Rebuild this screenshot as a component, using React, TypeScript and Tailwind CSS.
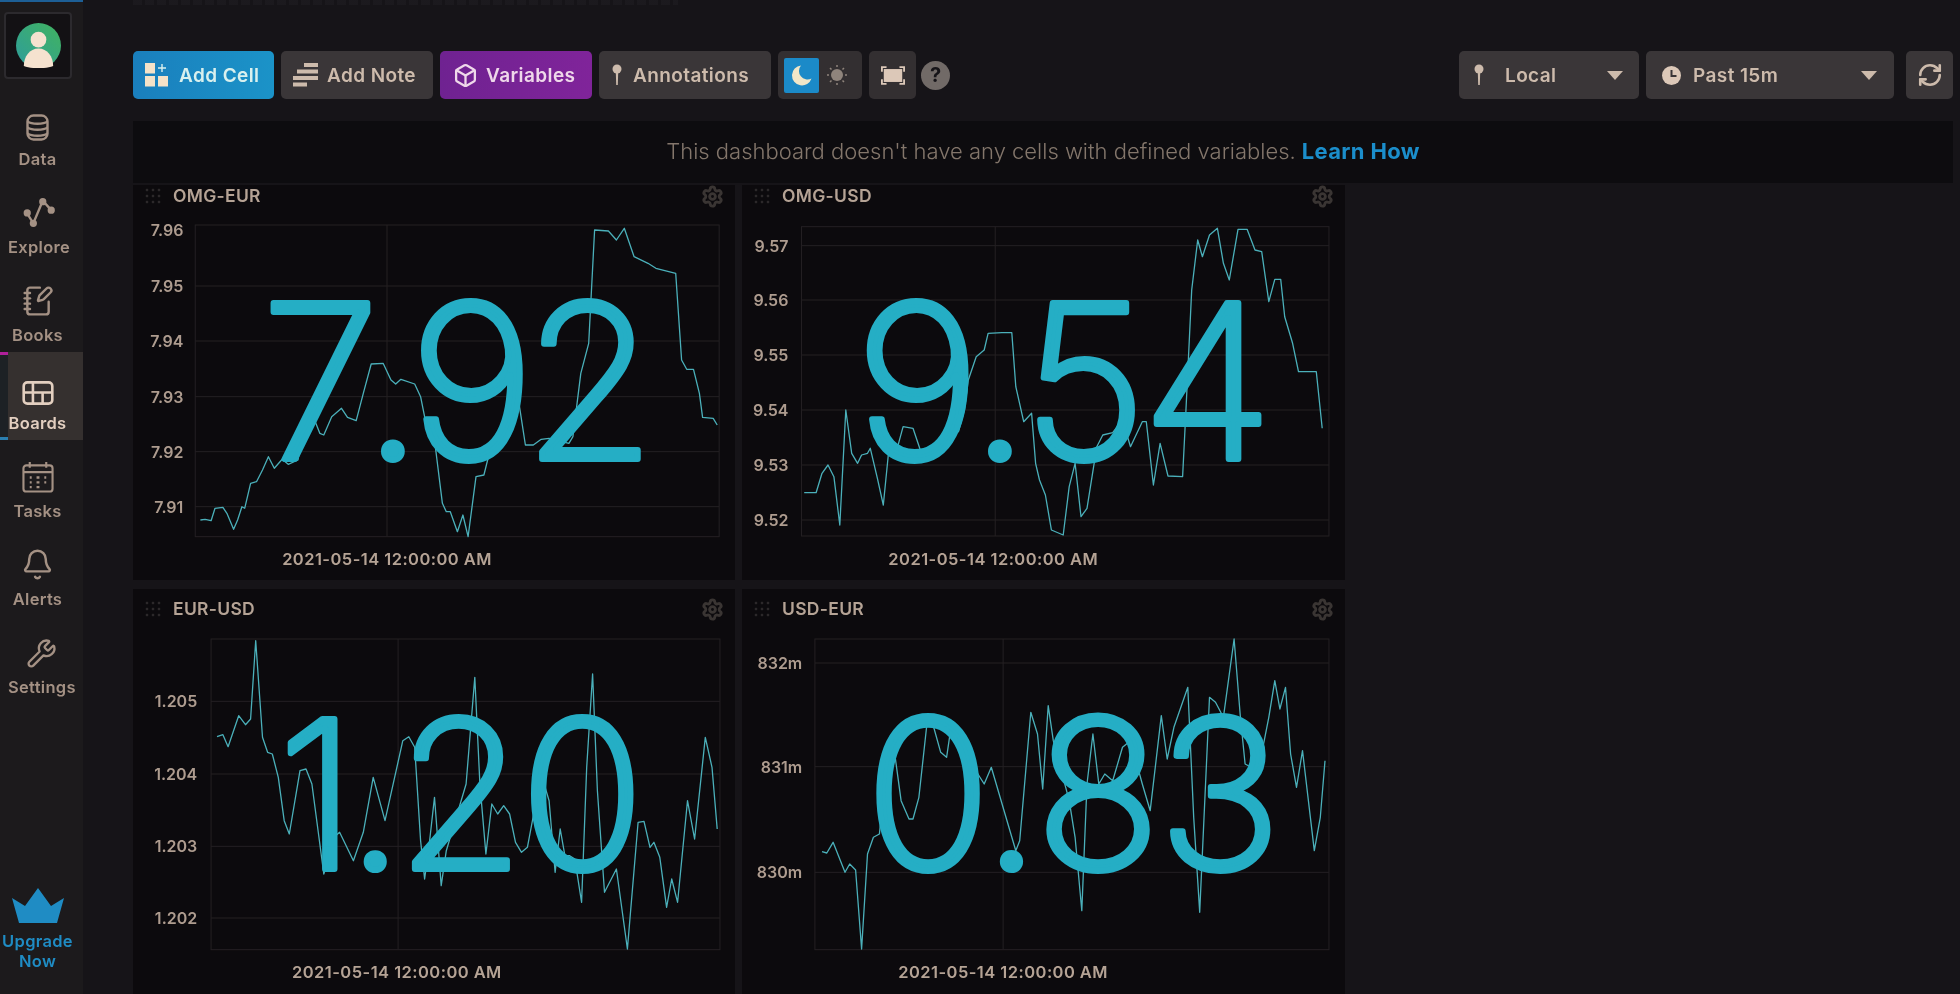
import React from "react";
import { NotebookPen, Bell, Wrench, Box, Settings as Gear, RefreshCw } from "lucide-react";

const SX = 1568 / 620;
const SY = 3;
const pts = (a: number[]) => {
  const o: string[] = [];
  for (let i = 0; i < a.length; i += 2) o.push(`${(a[i] / SX).toFixed(1)},${(a[i + 1] / SY).toFixed(1)}`);
  return o.join(" ");
};

type Cell = {
  title: string; value: string; box: number[]; h: number[]; v: number; labels: [string, number][]; labelRight: number; xc: number; xy: number; line: number[];
  head: string; num: [number, number, number, number];
};

const cells: Cell[] = [
  {
    title: "OMG-EUR", value: "7.92", box: [165, 135, 1490, 1070], h: [318, 483, 650, 815, 980], v: 650,
    labels: [["7.96", 150], ["7.95", 318], ["7.94", 483], ["7.93", 650], ["7.92", 815], ["7.91", 980]], labelRight: 135, xc: 650, xy: 1138,
    head: "h-[22px]", num: [320, 274, 214, -0.05],
    line: [178,1020,190,1018,205,1022,215,985,235,982,245,1000,262,1048,272,1020,283,980,290,985,305,910,320,905,335,870,350,830,365,865,385,838,400,853,425,840,440,735,460,700,480,760,490,765,510,710,535,685,550,712,572,722,590,640,610,552,640,550,660,600,672,612,685,598,720,612,735,650,750,740,770,780,790,970,800,995,810,995,828,1055,842,1005,855,1070,875,890,895,885,915,790,945,730,965,670,985,680,1000,795,1020,795,1040,778,1060,775,1110,790,1120,770,1140,580,1160,490,1175,150,1210,153,1230,180,1250,145,1275,230,1310,250,1330,265,1380,280,1395,540,1408,568,1425,568,1440,640,1448,712,1475,715,1485,735],
  },
  {
    title: "OMG-USD", value: "9.54", box: [158, 140, 1492, 1068], h: [197, 360, 525, 690, 855, 1020], v: 648,
    labels: [["9.57", 197], ["9.56", 360], ["9.55", 525], ["9.54", 690], ["9.53", 855], ["9.52", 1020]], labelRight: 125, xc: 643, xy: 1138,
    head: "h-[22px]", num: [320, 274, 214, -0.02],
    line: [165,938,195,938,210,880,225,855,240,890,255,1035,270,690,285,820,300,850,310,825,325,820,332,805,350,895,365,975,380,795,400,805,415,740,440,745,460,815,480,815,500,795,520,765,555,755,570,690,580,600,600,530,620,510,630,460,665,458,690,458,700,620,720,725,740,700,750,850,760,900,775,945,790,1050,820,1065,835,920,850,850,865,1010,880,985,905,800,920,765,945,758,970,720,990,800,1020,725,1030,725,1048,915,1065,790,1085,888,1122,890,1130,700,1145,330,1160,180,1172,230,1190,165,1210,145,1225,250,1240,300,1262,148,1285,148,1305,210,1322,215,1340,365,1355,298,1370,298,1380,410,1400,490,1415,575,1460,575,1475,745],
  },
  {
    title: "EUR-USD", value: "1.20", box: [205, 165, 1492, 1097], h: [352, 570, 787, 1002], v: 678,
    labels: [["1.205", 352], ["1.204", 570], ["1.203", 787], ["1.202", 1002]], labelRight: 170, xc: 675, xy: 1165,
    head: "h-[40px]", num: [326, 280, 206, -0.02],
    line: [220,458,235,452,248,488,275,395,292,422,305,405,318,170,335,460,348,505,360,510,375,580,390,710,403,750,430,560,445,555,460,600,490,870,520,755,530,745,565,830,590,745,615,580,645,710,690,470,705,458,720,490,735,770,745,885,755,800,770,640,787,905,800,800,850,600,872,280,885,600,900,810,915,660,930,690,945,665,960,690,975,775,990,805,1005,790,1040,570,1060,650,1075,865,1088,735,1100,815,1112,815,1125,825,1142,955,1155,550,1170,270,1182,620,1200,925,1230,855,1258,1095,1285,715,1300,712,1315,790,1325,775,1340,820,1357,970,1370,885,1385,955,1410,650,1428,765,1455,460,1472,550,1485,735],
  },
  {
    title: "USD-EUR", value: "0.83", box: [192, 165, 1492, 1097], h: [237, 548, 865], v: 668,
    labels: [["832m", 237], ["831m", 548], ["830m", 865]], labelRight: 160, xc: 668, xy: 1165,
    head: "h-[40px]", num: [330, 280, 208, -0.013],
    line: [210,803,222,807,238,775,268,865,280,840,295,858,310,1095,325,810,340,760,355,750,380,470,395,520,410,650,430,705,440,705,455,640,478,390,490,420,510,505,525,520,535,440,620,600,638,550,700,800,710,770,738,385,755,450,768,615,782,365,795,470,835,650,850,760,867,980,880,600,895,450,910,600,925,570,945,590,970,490,990,470,1020,600,1040,680,1068,395,1083,525,1100,430,1135,310,1150,700,1165,985,1190,340,1205,355,1225,400,1252,165,1268,400,1280,540,1295,550,1310,470,1325,490,1340,400,1355,290,1368,375,1382,310,1395,510,1410,610,1425,500,1455,800,1470,700,1482,530],
  },
];

const Grip = () => (
  <svg width="16" height="16" viewBox="0 0 16 16" fill="#2c282a" className="shrink-0">
    {[2, 8, 14].flatMap((x) => [2, 8, 14].map((y) => <rect key={`${x}${y}`} x={x - 1.2} y={y - 1.2} width="2.4" height="2.4" />))}
  </svg>
);

function Chart({ c }: { c: Cell }) {
  const [x0, y0, x1, y1] = c.box;
  const grid = "#242023";
  return (
    <svg width="620" height="410" className="absolute left-[-3px] top-[-5px]">
      <rect x={x0 / SX} y={y0 / SY} width={(x1 - x0) / SX} height={(y1 - y0) / SY} fill="none" stroke={grid} />
      {c.h.map((y) => (
        <line key={y} x1={x0 / SX} x2={x1 / SX} y1={y / SY} y2={y / SY} stroke={grid} />
      ))}
      <line x1={c.v / SX} x2={c.v / SX} y1={y0 / SY} y2={y1 / SY} stroke={grid} />
      <polyline points={pts(c.line)} fill="none" stroke="#4bb0ba" strokeWidth="1.3" strokeLinejoin="round" />
      {c.labels.map(([t, y]) => (
        <text key={t} x={c.labelRight / SX} y={y / SY + 6} textAnchor="end" fill="#ae9c8f" fontSize="16" fontWeight="600">{t}</text>
      ))}
      <text x={c.xc / SX} y={c.xy / SY + 6} textAnchor="middle" fill="#b5a395" fontSize="16.5" fontWeight="600" letterSpacing="0.45">2021-05-14 12:00:00 AM</text>
    </svg>
  );
}

function BigValue({ c }: { c: Cell }) {
  const [x, y, size, spacing] = c.num;
  const [a, b] = c.value.split(".");
  return (
    <svg width="600" height="400" className="absolute left-0 top-0">
      <text
        x={x}
        y={y}
        textAnchor="middle"
        fontSize={size}
        fontWeight="200"
        letterSpacing={size * spacing}
        fill="#25aec5"
        stroke="#25aec5"
        strokeWidth="6"
        strokeLinejoin="round"
      >
        {a}
        <tspan fontFamily="Roboto" fontWeight="300">.</tspan>
        {b}
      </text>
    </svg>
  );
}

function Cell({ c }: { c: Cell }) {
  return (
    <div className="relative min-w-0 overflow-hidden bg-[#0c0a0d]">
      <div className={`relative z-10 flex items-center pl-[12px] pr-[11px] ${c.head}`}>
        <Grip />
        <span className="ml-[12px] text-[17.5px] font-semibold leading-none tracking-[0.3px] text-[#b5a395]">{c.title}</span>
        <Gear size={23} className="ml-auto text-[#3a3533]" strokeWidth={3} />
      </div>
      <Chart c={c} />
      <BigValue c={c} />
    </div>
  );
}

const icon = "text-[#a49184]";
const nav: { label: string; active?: boolean; icon: React.ReactNode }[] = [
  {
    label: "Data",
    icon: (
      <svg width="23" height="27" viewBox="0 0 23 27" fill="none" stroke="currentColor" strokeWidth="2.4">
        <rect x="1.5" y="1.500" width="20" height="24" rx="6" />
        <path d="M1.500 7.500c4 3 16 3 20 0M1.500 13.500c4 3 16 3 20 0M1.500 19.500c4 3 16 3 20 0" />
      </svg>
    ),
  },
  {
    label: "Explore",
    icon: (
      <svg width="32" height="33" viewBox="0 0 34 33" fill="none" stroke="currentColor" strokeWidth="2.5">
        <polyline points="4,17 11,28 21,4 30,14" />
        <circle cx="4.500" cy="17" r="2.600" fill="currentColor" />
        <circle cx="11" cy="28" r="2.600" fill="currentColor" />
        <circle cx="21" cy="5" r="2.600" fill="currentColor" />
        <circle cx="30" cy="14" r="2.600" fill="currentColor" />
      </svg>
    ),
  },
  { label: "Books", icon: <NotebookPen size={32} strokeWidth={1.8} /> },
  {
    label: "Boards",
    active: true,
    icon: (
      <svg width="32" height="24" viewBox="0 0 34 26" fill="none" stroke="currentColor" strokeWidth="2.800">
        <rect x="1.500" y="1.500" width="31" height="23" rx="4" />
        <path d="M1.500 12.500H32.500M11.500 1.500V12.500M11.500 12.500V24.500M22 12.500V24.500" />
      </svg>
    ),
  },
  {
    label: "Tasks",
    icon: (
      <svg width="32" height="32" viewBox="0 0 33 33" fill="none" stroke="currentColor" strokeWidth="2.200">
        <rect x="1.500" y="4.500" width="30" height="27" rx="3" />
        <path d="M1.500 11.500H31.500M8 1V7M25 1V7" />
        <path d="M8 17H10M15 17H18M23 17H25M8 22H10M15 22H18M23 22H25M8 27H10M15 27H18" strokeWidth="2.400" />
      </svg>
    ),
  },
  { label: "Alerts", icon: <Bell size={33} strokeWidth={1.8} /> },
  { label: "Settings", icon: <Wrench size={31} strokeWidth={1.8} /> },
];

const btnText = "text-[19px] font-semibold leading-none tracking-[0.4px]";
const navText = "text-[16.5px] font-semibold leading-[20px] tracking-[0.3px]";

function Pin({ className }: { className?: string }) {
  return (
    <svg width="10" height="22" viewBox="0 0 10 22" fill="currentColor" className={className}>
      <circle cx="5" cy="5" r="4.500" />
      <path d="M3.800 8h2.400l-.4 13h-1.600z" />
    </svg>
  );
}

function Caret() {
  return (
    <svg width="16" height="9" viewBox="0 0 16 9" fill="currentColor" className="ml-auto">
      <path d="M0 0h16L8 9z" />
    </svg>
  );
}

export default function App() {
  return (
    <div className="flex h-[994px] w-[1960px] overflow-hidden bg-[#161418] blur-[0.6px] [font-family:Inter,'Liberation_Sans',sans-serif]">
      <aside className="flex w-[83px] shrink-0 flex-col bg-[#1c1a1c]">
        <div className="h-[2px] bg-[#1d5f96]" />
        <div className="ml-[4px] mt-[10px] flex h-[67px] w-[68px] items-center justify-center rounded-[4px] border-2 border-[#2c2a2e] bg-[#131114]">
          <svg width="45" height="45" viewBox="0 0 46 46">
            <defs>
              <linearGradient id="av" x1="1" y1="0" x2="0" y2="1">
                <stop offset="0" stopColor="#41b35f" />
                <stop offset="1" stopColor="#2e9d9c" />
              </linearGradient>
            </defs>
            <circle cx="23" cy="23" r="23" fill="url(#av)" />
            <circle cx="23" cy="17" r="8" fill="#f5e2cf" />
            <path d="M8 44c0-10 6-18 15-18s15 8 15 18c-8 3-22 3-30 0z" fill="#f5e2cf" />
          </svg>
        </div>
        <nav className="mt-[9px] flex flex-col">
          {nav.map((n) => (
            <div key={n.label} className={`flex h-[88px] ${n.active ? "text-[#e3cfc0]" : icon}`}>
              <div className={`w-[8px] shrink-0 ${n.active ? "bg-[linear-gradient(#b0209a_0,#b0209a_3px,#1d2125_3px,#1d2125_85px,#2b7fb0_85px)]" : ""}`} />
              <div className={`flex h-[88px] flex-1 flex-col items-center pr-[16px] ${n.active ? "bg-[#35302f]" : ""}`}>
                <div className="flex h-[58px] items-end justify-center pb-[5px]">{n.icon}</div>
                <span className={`mt-[3px] whitespace-nowrap ${navText}`}>{n.label}</span>
              </div>
            </div>
          ))}
        </nav>
        <div className="mt-auto flex flex-col items-center pb-[23px] pr-[8px] text-[#1f8cc4]">
          <svg width="52" height="35" viewBox="0 0 52 35" fill="currentColor">
            <path d="M0 10l13 8L26 0l13 18 13-8-7 25H7z" />
          </svg>
          <span className={`mt-[8px] text-center ${navText}`}>Upgrade<br />Now</span>
        </div>
      </aside>

      <main className="flex min-w-0 flex-1 flex-col pl-[50px] pr-[7px]">
        <div className="h-[5px] w-[545px] bg-[repeating-linear-gradient(90deg,#211f24_0,#211f24_9px,#161418_9px,#161418_12px)] opacity-50" />
        <div className="mt-[46px] flex h-[48px] items-stretch justify-between">
          <div className="flex items-stretch gap-[7px]">
            <button className="flex w-[141px] items-center gap-[9px] rounded-[5px] bg-[linear-gradient(90deg,#1a7fbd,#1b93c8)] pl-[12px] text-[#d9f0ee]">
              <svg width="25" height="24" viewBox="0 0 25 24" fill="currentColor">
                <rect x="0" y="0" width="10" height="10.500" fill="#f5e2c8" />
                <rect x="0" y="13" width="10" height="10.500" fill="#f5e2c8" />
                <rect x="13" y="13" width="10" height="10.500" fill="#f5e2c8" />
                <path d="M17 1v8M13 5h8" stroke="currentColor" strokeWidth="1.400" />
              </svg>
              <span className={btnText}>Add Cell</span>
            </button>
            <button className="flex w-[152px] items-center gap-[9px] rounded-[5px] bg-[#3a3638] pl-[12px] text-[#cdbbac]">
              <svg width="25" height="24" viewBox="0 0 25 24" fill="currentColor">
                <rect x="11" y="0" width="14" height="4" />
                <rect x="4" y="6.500" width="21" height="4" />
                <rect x="0" y="13" width="25" height="4" />
                <rect x="0" y="19.500" width="14" height="4" />
              </svg>
              <span className={btnText}>Add Note</span>
            </button>
            <button className="flex w-[152px] items-center gap-[8px] rounded-[5px] bg-[linear-gradient(90deg,#6f2291,#80249a)] pl-[13px] text-[#efd8ea]">
              <Box size={25} strokeWidth={2.2} />
              <span className={btnText}>Variables</span>
            </button>
            <button className="flex w-[172px] items-center gap-[11px] rounded-[5px] bg-[#3a3638] pl-[13px] text-[#cdbbac]">
              <Pin />
              <span className={btnText}>Annotations</span>
            </button>
            <div className="flex w-[84px] items-center rounded-[5px] bg-[#332f31] pl-[6px]">
              <div className="flex h-[35px] w-[35px] items-center justify-center rounded-[2px] bg-[#1b8ac8]">
                <svg width="24" height="24" viewBox="0 0 24 24" fill="#f0e6c8">
                  <path d="M11 2.500a10 10 0 1 0 10.500 13 8.500 8.500 0 0 1-10.500-13z" />
                </svg>
              </div>
              <svg width="22" height="22" viewBox="0 0 22 22" className="ml-[7px] text-[#8f847c]" fill="currentColor" stroke="currentColor">
                <circle cx="11" cy="11" r="6" stroke="none" />
                <path d="M11 1v2M11 19v2M1 11h2M19 11h2M4 4l1.500 1.500M16.500 16.500L18 18M4 18l1.500-1.500M16.500 5.500L18 4" strokeWidth="1.500" />
              </svg>
            </div>
            <button className="flex w-[47px] items-center justify-center rounded-[5px] bg-[#332f31]">
              <svg width="24" height="19" viewBox="0 0 26 20" fill="#dcc8b8">
                <rect x="3" y="3" width="20" height="14" />
                <path d="M0 0h6v2H2v4H0zM26 0h-6v2h4v4h2zM0 20h6v-2H2v-4H0zM26 20h-6v-2h4v-4h2z" />
              </svg>
            </button>
            <div className="-ml-[2px] flex h-[29px] w-[29px] items-center justify-center self-center rounded-full bg-[#716a67] text-[20px] font-bold leading-none text-[#161418]">?</div>
          </div>
          <div className="flex items-stretch">
            <button className="flex w-[180px] items-center rounded-[5px] bg-[#3a3638] pl-[15px] pr-[16px] text-[#cdbbac]">
              <Pin />
              <span className={`ml-[21px] ${btnText}`}>Local</span>
              <Caret />
            </button>
            <button className="ml-[7px] flex w-[248px] items-center rounded-[5px] bg-[#3a3638] pl-[16px] pr-[17px] text-[#cdbbac]">
              <svg width="19" height="19" viewBox="0 0 19 19">
                <circle cx="9.500" cy="9.500" r="9.500" fill="#dcc8b8" />
                <path d="M9.500 4v6h5" fill="none" stroke="#3a3638" strokeWidth="2" />
              </svg>
              <span className={`ml-[12px] ${btnText}`}>Past 15m</span>
              <Caret />
            </button>
            <button className="ml-[12px] flex w-[47px] items-center justify-center rounded-[5px] bg-[#3a3638] text-[#cdbbac]">
              <RefreshCw size={26} strokeWidth={2.4} />
            </button>
          </div>
        </div>
        <div className="mt-[22px] flex h-[62px] shrink-0 items-center justify-center bg-[#0d0c0f] pb-[1px] text-[22px] font-light text-[#83766b]">
          <span>This dashboard doesn't have any cells with defined variables.</span>
          <span className="ml-[6px] font-bold tracking-[0.35px] text-[#1b8ecb]">Learn How</span>
        </div>
        <div className="mt-[2px] grid w-[1212px] grid-cols-[602px_603px] grid-rows-[395px_405px] gap-x-[7px] gap-y-[9px]">
          {cells.map((c) => (
            <Cell key={c.title} c={c} />
          ))}
        </div>
      </main>
    </div>
  );
}
